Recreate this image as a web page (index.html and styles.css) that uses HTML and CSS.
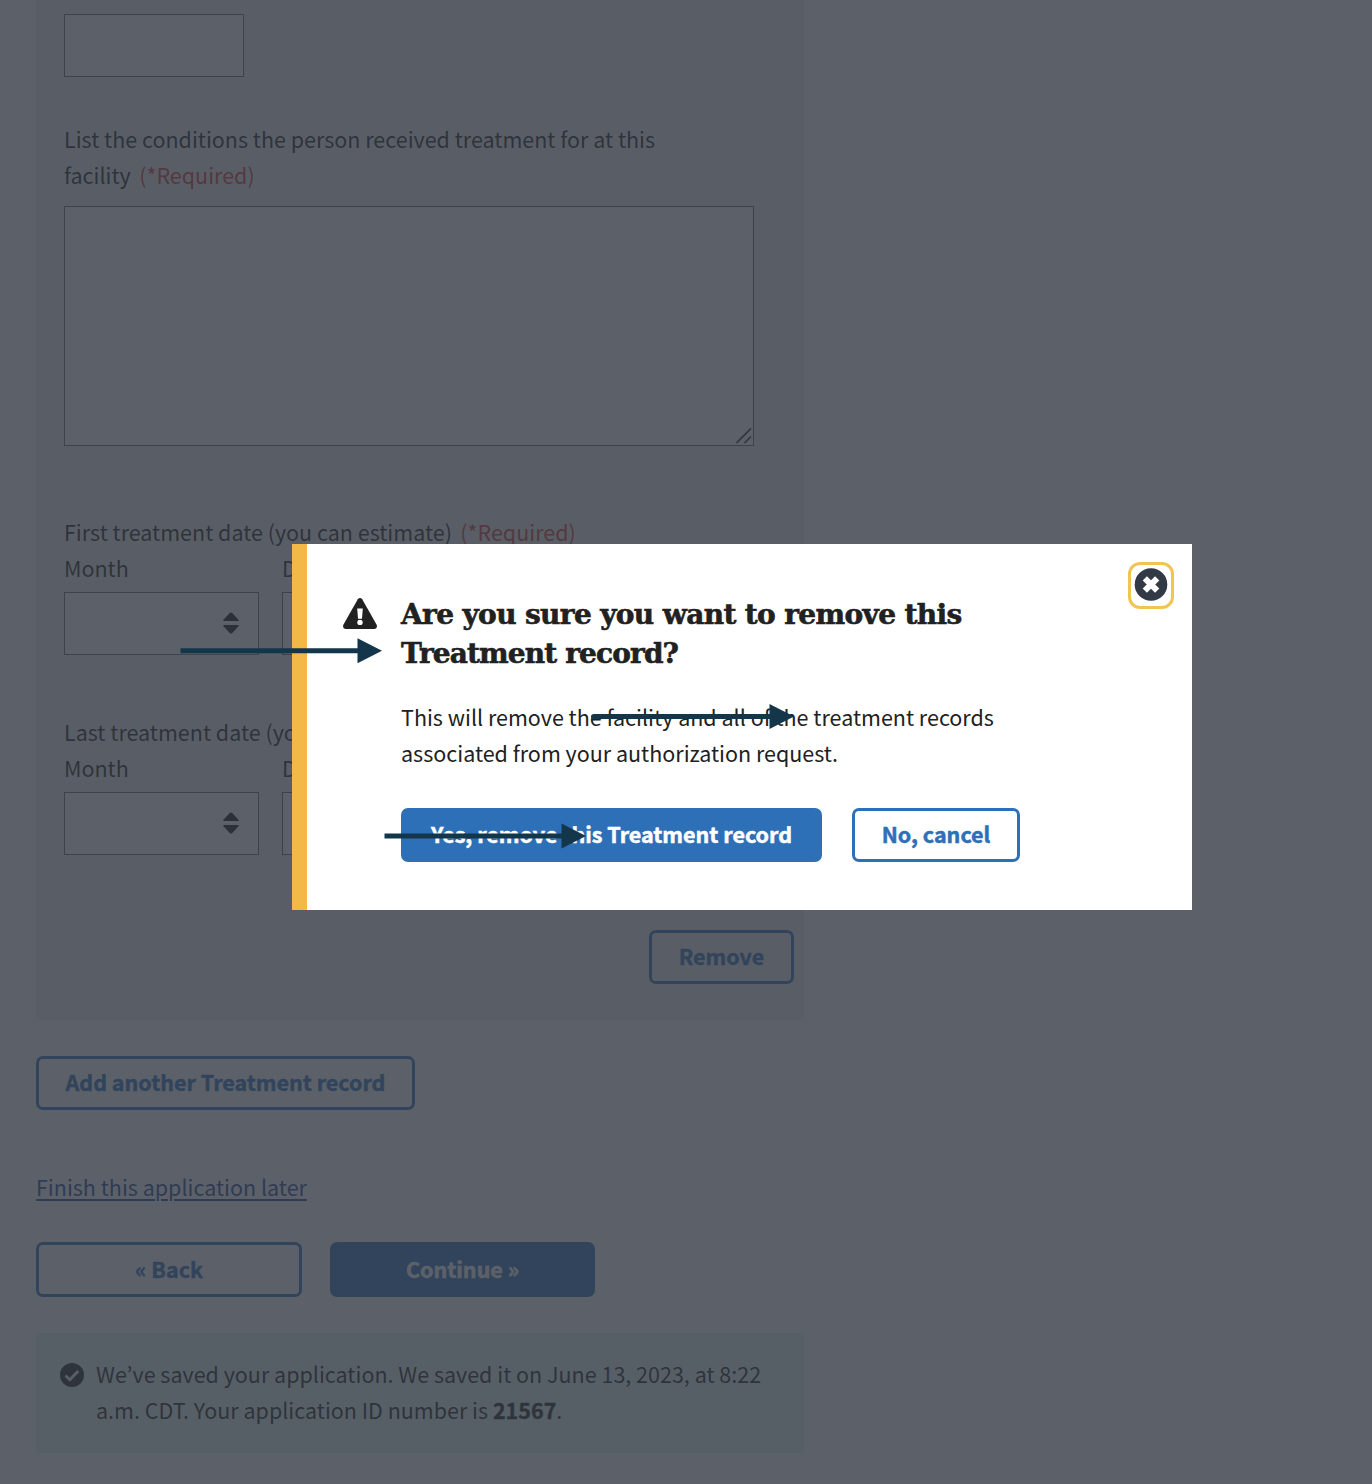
FILE: index.html
```html
<!DOCTYPE html>
<html lang="en">
<head>
<meta charset="utf-8">
<title>Treatment records</title>
<link rel="stylesheet" href="styles.css">
</head>
<body>
<main class="page">
  <section class="panel">
    <div class="field zip"></div>
    <p class="label conditions">List the conditions the person received treatment for at this<br>facility <span class="required">(*Required)</span></p>
    <div class="field textarea">
      <svg class="grip" width="16" height="16" viewBox="0 0 16 16"><path d="M.5 15L15 .5M8.500 15L15 8.500" stroke="#2a2a2a" stroke-width="1.700"/></svg>
    </div>
    <div class="date">
      <p class="label">First treatment date (you can estimate) <span class="required">(*Required)</span></p>
      <div class="date-row">
        <div class="date-part"><p class="label">Month</p><div class="field select"><svg width="16" height="22" viewBox="0 0 16 22"><path d="M1 9Q-.3 8.800.7 7.500L7 .8Q8 0 9 .8L15.300 7.500Q16.300 8.800 15 9ZM1 13Q-.3 13.200.7 14.500L7 21.200Q8 22 9 21.200L15.300 14.500Q16.300 13.200 15 13Z" fill="#111"/></svg></div></div>
        <div class="date-part"><p class="label">Day</p><div class="field select"></div></div>
      </div>
    </div>
    <div class="date last">
      <p class="label">Last treatment date (you can estimate)</p>
      <div class="date-row">
        <div class="date-part"><p class="label">Month</p><div class="field select"><svg width="16" height="22" viewBox="0 0 16 22"><path d="M1 9Q-.3 8.800.7 7.500L7 .8Q8 0 9 .8L15.300 7.500Q16.300 8.800 15 9ZM1 13Q-.3 13.200.7 14.500L7 21.200Q8 22 9 21.200L15.300 14.500Q16.300 13.200 15 13Z" fill="#111"/></svg></div></div>
        <div class="date-part"><p class="label">Day</p><div class="field select"></div></div>
      </div>
    </div>
    <div class="panel-actions"><button class="btn remove">Remove</button></div>
  </section>
  <button class="btn add">Add another Treatment record</button>
  <a class="finish">Finish this application later</a>
  <div class="nav"><button class="btn">« Back</button><button class="btn primary">Continue »</button></div>
  <section class="saved">
    <svg width="24" height="24" viewBox="0 0 24 24"><circle cx="12" cy="12" r="12" fill="#212121"/><path d="M5.500 12.500l4.300 4.200 8.500-8.700" fill="none" stroke="#e7f4f0" stroke-width="2.800"/></svg>
    <p class="label">We’ve saved your application. We saved it on June 13, 2023, at 8:22<br>a.m. CDT. Your application ID number is <b>21567</b>.</p>
  </section>
</main>

<div class="overlay">
  <div class="modal" role="dialog">
    <svg class="warning" width="34" height="31" viewBox="0 0 34 31"><path d="M14.800 1.300Q17-1.200 19.200 1.300L33.500 26.500Q35 30.300 31.500 31H2.500Q-1 30.300.5 26.500Z" fill="#212121"/><path d="M14.200 10.500h5.600l-.8 10.300h-4Z" fill="#fff"/><circle cx="17" cy="24.400" r="2.700" fill="#fff"/></svg>
    <div class="modal-body">
      <h1><span class="title-a">Are you sure you want to remove this</span><br><span class="title-b">Treatment record?</span></h1>
      <p class="message">This will remove the facility and all of the treatment records<br>associated from your authorization request.</p>
      <div class="modal-actions"><button class="btn primary yes">Yes, remove this Treatment record</button><button class="btn cancel">No, cancel</button></div>
    </div>
    <button class="close" aria-label="Close"><svg width="34" height="33" viewBox="0 0 34 33"><circle cx="17" cy="16.500" r="16.300" fill="#323a45"/><path d="M10.800 10.300l12.400 12.400M23.200 10.300L10.800 22.700" stroke="#fff" stroke-width="6"/></svg></button>
  </div>
</div>

<svg class="arrows" width="1372" height="1484" viewBox="0 0 1372 1484" fill="#13364a">
  <path d="M180.500 648.200H357.500V638.200L382 650.700 357.500 663.200V653.200H180.500Z"/>
  <path d="M594 714H769.500V704L794 716.500 769.500 729V719H594Q591 719 591 716.500T594 714Z"/>
  <path d="M384.500 833.500H561.500V823.500L586 836 561.500 848.500V838.500H384.500Z"/>
</svg>
</body>
</html>
```
FILE: styles.css
```css
* { box-sizing: border-box; }
body {
  margin: 0;
  height: 1484px;
  overflow: hidden;
  background: #fff;
  color: #212121;
  font-family: "Noto Sans CJK KR", "Open Sans", sans-serif;
  font-size: 21.5px;
  line-height: 36px;
}
p, h1 { margin: 0; }
.page { width: 804px; padding-left: 36px; display: flex; flex-direction: column; align-items: flex-start; }
.panel { width: 768px; height: 1020px; padding: 14px 10px 0 28px; background: #f1f1f1; }
.field { background: #fff; border: 1px solid #666c76; }
.zip { width: 180px; height: 63px; }
.label { white-space: nowrap; }
.conditions { margin-top: 44px; }
.required { color: #d83933; margin-left: 3.5px; }
.textarea { width: 690px; height: 240px; margin-top: 13px; display: flex; justify-content: flex-end; align-items: flex-end; padding: 1px; }
.date { margin-top: 68px; }
.date.last { margin-top: 59px; }
.date-row { display: flex; gap: 23px; }
.select { width: 195px; height: 63px; margin-top: 6px; display: flex; align-items: center; justify-content: flex-end; padding: 0 19px 1px 0; }
.panel-actions { display: flex; justify-content: flex-end; margin-top: 75px; }
.btn {
  height: 54px;
  padding: 0 0 2px;
  border: 3px solid #2e70b7;
  border-radius: 7px;
  background: transparent;
  color: #2e70b7;
  font: bold 21.5px/36px "Noto Sans CJK KR", "Open Sans", sans-serif;
  -webkit-text-stroke: .5px;
  white-space: nowrap;
}
.btn.primary { background: #2e70b7; color: #fff; }
.remove { width: 145px; }
.add { width: 379px; margin-top: 36px; }
.finish { margin-top: 59px; color: #1f4590; text-decoration: underline; text-underline-offset: 3px; text-decoration-thickness: 2px; }
.nav { display: flex; gap: 28px; margin-top: 37px; }
.nav .btn { width: 266px; height: 55px; }
.nav .primary { width: 265px; }
.saved { width: 768px; height: 120px; margin-top: 36px; padding: 23px 24px; display: flex; gap: 12px; background: #e7f4f0; }
.saved b { -webkit-text-stroke: .4px; }
.saved svg { margin-top: 7px; flex: none; }
.overlay { position: fixed; inset: 0; background: rgba(51, 57, 68, .8); display: flex; padding: 544px 0 0 292px; }
.modal { width: 900px; height: 366px; background: #fff; border-left: 15px solid #f3b946; display: flex; padding: 18px 18px 0 36px; }
.warning { margin-top: 36px; flex: none; }
.modal-body { margin: 33px 0 0 24px; width: 727px; }
h1 { font: bold 28px/39px "DejaVu Serif", serif; white-space: nowrap; -webkit-text-stroke: .6px; }
.title-a { letter-spacing: -.64px; }
.title-b { letter-spacing: -.87px; }
.message { margin-top: 26px; white-space: nowrap; }
.modal-actions { display: flex; gap: 30px; margin-top: 37px; }
.yes { width: 421px; }
.cancel { width: 168px; }
.close { width: 46px; height: 47px; padding: 0 0 2px; border: 3px solid #f2c550; border-radius: 12px; background: #fff; flex: none; display: flex; align-items: center; justify-content: center; }
.arrows { position: absolute; left: 0; top: 0; }
```
